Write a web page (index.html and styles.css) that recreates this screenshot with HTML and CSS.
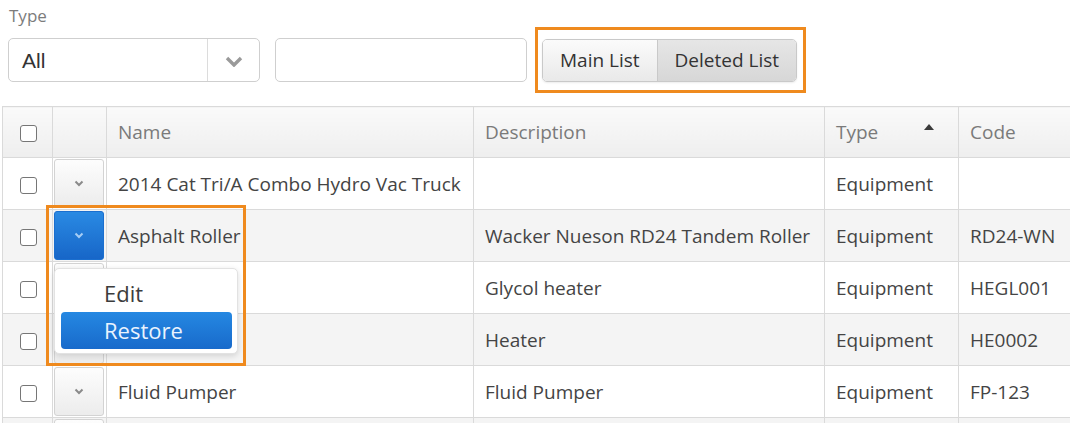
FILE: index.html
```html
<!DOCTYPE html>
<html>
<head>
<meta charset="utf-8">
<link rel="stylesheet" href="styles.css">
</head>
<body>
<div class="page">
  <div class="filters">
    <div class="label">Type</div>
    <div class="controls">
      <div class="select">
        <span class="select-value">All</span>
        <span class="select-arrow">
          <svg width="18" height="11" viewBox="0 0 18 11"><path d="M2 2 L9 9 L16 2" fill="none" stroke="#9a9a9a" stroke-width="3.4"/></svg>
        </span>
      </div>
      <div class="text-input"></div>
      <div class="highlight-box">
        <div class="btn-group">
          <div class="btn">Main List</div>
          <div class="btn active">Deleted List</div>
        </div>
      </div>
    </div>
  </div>

  <div class="grid">
    <table class="table">
      <colgroup>
        <col class="c-check"><col class="c-menu"><col class="c-name"><col class="c-desc"><col class="c-type"><col class="c-code">
      </colgroup>
      <thead>
        <tr>
          <th class="cell-check"><span class="checkbox"></span></th>
          <th></th>
          <th>Name</th>
          <th>Description</th>
          <th><div class="th-sort">Type<svg width="10" height="6" viewBox="0 0 10 6"><path d="M0 6 L5 0 L10 6 Z" fill="#3a3a3a"/></svg></div></th>
          <th>Code</th>
        </tr>
      </thead>
      <tbody>
        <tr>
          <td class="cell-check"><span class="checkbox"></span></td>
          <td class="cell-menu"><div class="row-btn"><svg width="10" height="7" viewBox="0 0 10 7"><path d="M1.5 1.5 L5 5 L8.5 1.5" fill="none" stroke="#8a8a8a" stroke-width="2"/></svg></div></td>
          <td>2014 Cat Tri/A Combo Hydro Vac Truck</td>
          <td></td>
          <td>Equipment</td>
          <td></td>
        </tr>
        <tr class="alt">
          <td class="cell-check"><span class="checkbox"></span></td>
          <td class="cell-menu"><div class="row-btn open"><svg width="10" height="7" viewBox="0 0 10 7"><path d="M1.5 1.5 L5 5 L8.5 1.5" fill="none" stroke="#a6cdf5" stroke-width="2"/></svg></div></td>
          <td>Asphalt Roller</td>
          <td>Wacker Nueson RD24 Tandem Roller</td>
          <td>Equipment</td>
          <td>RD24-WN</td>
        </tr>
        <tr>
          <td class="cell-check"><span class="checkbox"></span></td>
          <td class="cell-menu"><div class="row-btn"><svg width="10" height="7" viewBox="0 0 10 7"><path d="M1.5 1.5 L5 5 L8.5 1.5" fill="none" stroke="#8a8a8a" stroke-width="2"/></svg></div></td>
          <td></td>
          <td>Glycol heater</td>
          <td>Equipment</td>
          <td>HEGL001</td>
        </tr>
        <tr class="alt">
          <td class="cell-check"><span class="checkbox"></span></td>
          <td class="cell-menu"><div class="row-btn"><svg width="10" height="7" viewBox="0 0 10 7"><path d="M1.5 1.5 L5 5 L8.5 1.5" fill="none" stroke="#8a8a8a" stroke-width="2"/></svg></div></td>
          <td></td>
          <td>Heater</td>
          <td>Equipment</td>
          <td>HE0002</td>
        </tr>
        <tr>
          <td class="cell-check"><span class="checkbox"></span></td>
          <td class="cell-menu"><div class="row-btn"><svg width="10" height="7" viewBox="0 0 10 7"><path d="M1.5 1.5 L5 5 L8.5 1.5" fill="none" stroke="#8a8a8a" stroke-width="2"/></svg></div></td>
          <td>Fluid Pumper</td>
          <td>Fluid Pumper</td>
          <td>Equipment</td>
          <td>FP-123</td>
        </tr>
        <tr class="alt">
          <td class="cell-check"><span class="checkbox"></span></td>
          <td class="cell-menu"><div class="row-btn"><svg width="10" height="7" viewBox="0 0 10 7"><path d="M1.5 1.5 L5 5 L8.5 1.5" fill="none" stroke="#8a8a8a" stroke-width="2"/></svg></div></td>
          <td></td>
          <td></td>
          <td></td>
          <td></td>
        </tr>
      </tbody>
    </table>

    <div class="menu">
      <div class="menu-item">Edit</div>
      <div class="menu-item selected">Restore</div>
    </div>
    <div class="menu-highlight"></div>
  </div>
</div>
</body>
</html>
```

FILE: styles.css
```css
html, body {
  margin: 0;
  padding: 0;
  background: #ffffff;
  overflow: hidden;
}

body {
  font-family: "Open Sans", "Liberation Sans", sans-serif;
  color: #424242;
  width: 1070px;
  height: 423px;
}

.page {
  width: 1070px;
  height: 423px;
  overflow: hidden;
}

.filters {
  padding: 5px 0 0 8px;
}

.label {
  font-size: 17px;
  line-height: 22px;
  color: #7c7c7c;
  padding-left: 1px;
}

.controls {
  display: flex;
  align-items: center;
  height: 66px;
}

.select {
  box-sizing: border-box;
  width: 252px;
  height: 44px;
  border: 1px solid #cfcfcf;
  border-radius: 5px;
  display: flex;
  align-items: stretch;
  background: #fff;
}

.select-value {
  flex: 1;
  display: flex;
  align-items: center;
  padding-left: 13px;
  padding-top: 1px;
  font-family: "Liberation Sans", Arial, sans-serif;
  font-size: 21px;
  color: #333;
  border-right: 1px solid #dcdcdc;
}

.select-arrow {
  width: 51px;
  display: flex;
  align-items: center;
  justify-content: center;
  padding-top: 2px;
}

.text-input {
  box-sizing: border-box;
  width: 252px;
  height: 44px;
  margin-left: 15px;
  border: 1px solid #cfcfcf;
  border-radius: 5px;
  background: #fff;
}

.highlight-box {
  box-sizing: border-box;
  margin-left: 8px;
  height: 66px;
  border: 3px solid #ef8a1e;
  padding: 0 6px 0 4px;
  display: flex;
  align-items: center;
}

.btn-group {
  display: flex;
  height: 43px;
  box-sizing: border-box;
  border: 1px solid #c9c9c9;
  border-radius: 5px;
  overflow: hidden;
  box-shadow: 0 1px 2px rgba(0, 0, 0, 0.08);
}

.btn {
  display: flex;
  align-items: center;
  padding: 0 17px 1px 17px;
  font-size: 19px;
  color: #333;
  background: linear-gradient(#fbfbfb, #e9e9e9);
}

.btn + .btn {
  border-left: 1px solid #c9c9c9;
}

.btn.active {
  background: linear-gradient(#e6e6e6, #d7d7d7);
}

.grid {
  position: relative;
  margin-top: 13px;
}

.table {
  margin-left: 2px;
  border-collapse: collapse;
  table-layout: fixed;
  width: 1120px;
  font-size: 19px;
}

.c-check { width: 50px; }
.c-menu { width: 54px; }
.c-name { width: 367px; }
.c-desc { width: 351px; }
.c-type { width: 134px; }
.c-code { width: 164px; }

.table th,
.table td {
  border: 1px solid #dadada;
  height: 51px;
  box-sizing: border-box;
  padding: 0 0 0 11px;
  text-align: left;
  white-space: nowrap;
  overflow: hidden;
}

.table th {
  font-weight: normal;
  color: #7a7a7a;
  background: linear-gradient(#fafafa, #eeeeee);
}

.table tbody tr.alt td {
  background: #f4f4f4;
}

.table td {
  background: #fff;
  color: #444;
}

.table .cell-check {
  padding: 0;
  text-align: center;
}

.checkbox {
  display: inline-block;
  width: 17px;
  height: 17px;
  box-sizing: border-box;
  border: 1.5px solid #767676;
  border-radius: 3px;
  background: #fff;
  vertical-align: middle;
  margin-left: 1px;
}

.th-sort {
  display: flex;
  align-items: center;
  justify-content: space-between;
  padding-right: 24px;
}

.th-sort svg {
  margin-top: -10px;
}

.table .cell-menu {
  padding: 1px 2px 1px 1px;
}

.row-btn {
  box-sizing: border-box;
  height: 49px;
  border: 1px solid #d3d3d3;
  border-radius: 3px;
  background: linear-gradient(#fdfdfd, #ececec);
  display: flex;
  align-items: center;
  justify-content: center;
}

.row-btn.open {
  border-color: #1b6fcf;
  background: linear-gradient(#2a8ae3, #1766c8);
}

.menu {
  position: absolute;
  left: 54px;
  top: 162px;
  width: 184px;
  box-sizing: border-box;
  padding: 6px 5px 4px 6px;
  background: #fff;
  border: 1px solid #e2e2e2;
  border-radius: 5px;
  box-shadow: 0 2px 6px rgba(0, 0, 0, 0.14);
}

.menu-item {
  height: 37px;
  line-height: 36px;
  padding-left: 43px;
  font-size: 22px;
  color: #3c3c3c;
  border-radius: 4px;
}

.menu-item.selected {
  background: linear-gradient(#2588e2, #186acb);
  color: #e9f3fe;
}

.menu-highlight {
  position: absolute;
  left: 46px;
  top: 99px;
  width: 200px;
  height: 161px;
  box-sizing: border-box;
  border: 3px solid #ef8a1e;
}
```
